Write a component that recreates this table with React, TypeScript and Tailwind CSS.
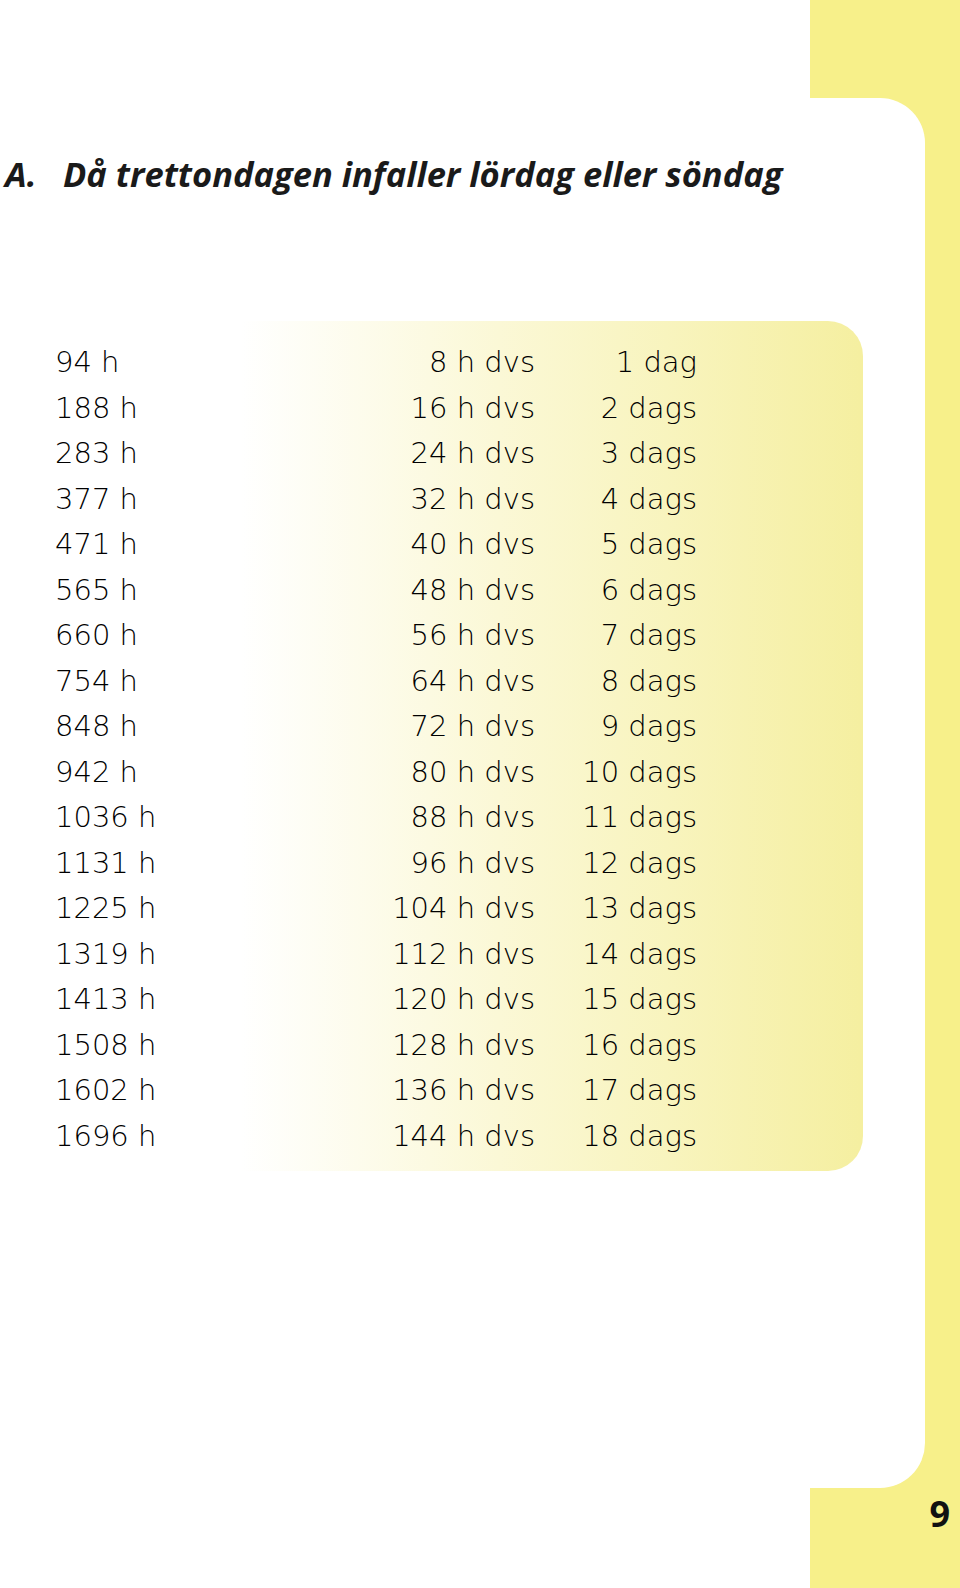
const rows: [string, string, string][] = [
  ['94 h', '8 h dvs', '1 dag'],
  ['188 h', '16 h dvs', '2 dags'],
  ['283 h', '24 h dvs', '3 dags'],
  ['377 h', '32 h dvs', '4 dags'],
  ['471 h', '40 h dvs', '5 dags'],
  ['565 h', '48 h dvs', '6 dags'],
  ['660 h', '56 h dvs', '7 dags'],
  ['754 h', '64 h dvs', '8 dags'],
  ['848 h', '72 h dvs', '9 dags'],
  ['942 h', '80 h dvs', '10 dags'],
  ['1036 h', '88 h dvs', '11 dags'],
  ['1131 h', '96 h dvs', '12 dags'],
  ['1225 h', '104 h dvs', '13 dags'],
  ['1319 h', '112 h dvs', '14 dags'],
  ['1413 h', '120 h dvs', '15 dags'],
  ['1508 h', '128 h dvs', '16 dags'],
  ['1602 h', '136 h dvs', '17 dags'],
  ['1696 h', '144 h dvs', '18 dags'],
];

export default function App() {
  return (
    <div className="flex min-h-[1588px] w-[960px] bg-white text-[#1a1a1a]">
      <main className="w-[810px] shrink-0">
        <h1 className="mt-[154px] flex pl-[5px] font-['Open_Sans',sans-serif] text-[34.5px] font-bold italic leading-[40px]">
          <span className="w-[58px]">A.</span>
          <span>Då trettondagen infaller lördag eller söndag</span>
        </h1>

        {/* relative so the card paints over the white part of the side frame */}
        <div className="relative ml-[55px] mt-[127px] w-[808px] rounded-r-[35px] bg-linear-to-r from-white from-[23%] via-[#fbf8d6] via-[55%] to-[#f5efa0] pt-[19px] pb-[12px] font-['DejaVu_Sans',sans-serif] text-[29px] font-extralight leading-[45.5px] text-black">
          {rows.map(([a, b, c]) => (
            <div key={a} className="flex">
              <span className="w-[160px]">{a}</span>
              <span className="w-[320px] text-right">{b}</span>
              <span className="w-[162px] text-right">{c}</span>
            </div>
          ))}
        </div>
      </main>

      <aside className="flex w-[150px] flex-col bg-[#f7f08a]">
        <div className="h-[98px]" />
        <div className="w-[115px] flex-1 rounded-r-[45px] bg-white" />
        <div className="flex h-[100px] justify-end pr-[10px] pt-[6px] font-['Open_Sans',sans-serif] text-[36px] font-bold leading-[40px] text-[#111]">
          9
        </div>
      </aside>
    </div>
  );
}
